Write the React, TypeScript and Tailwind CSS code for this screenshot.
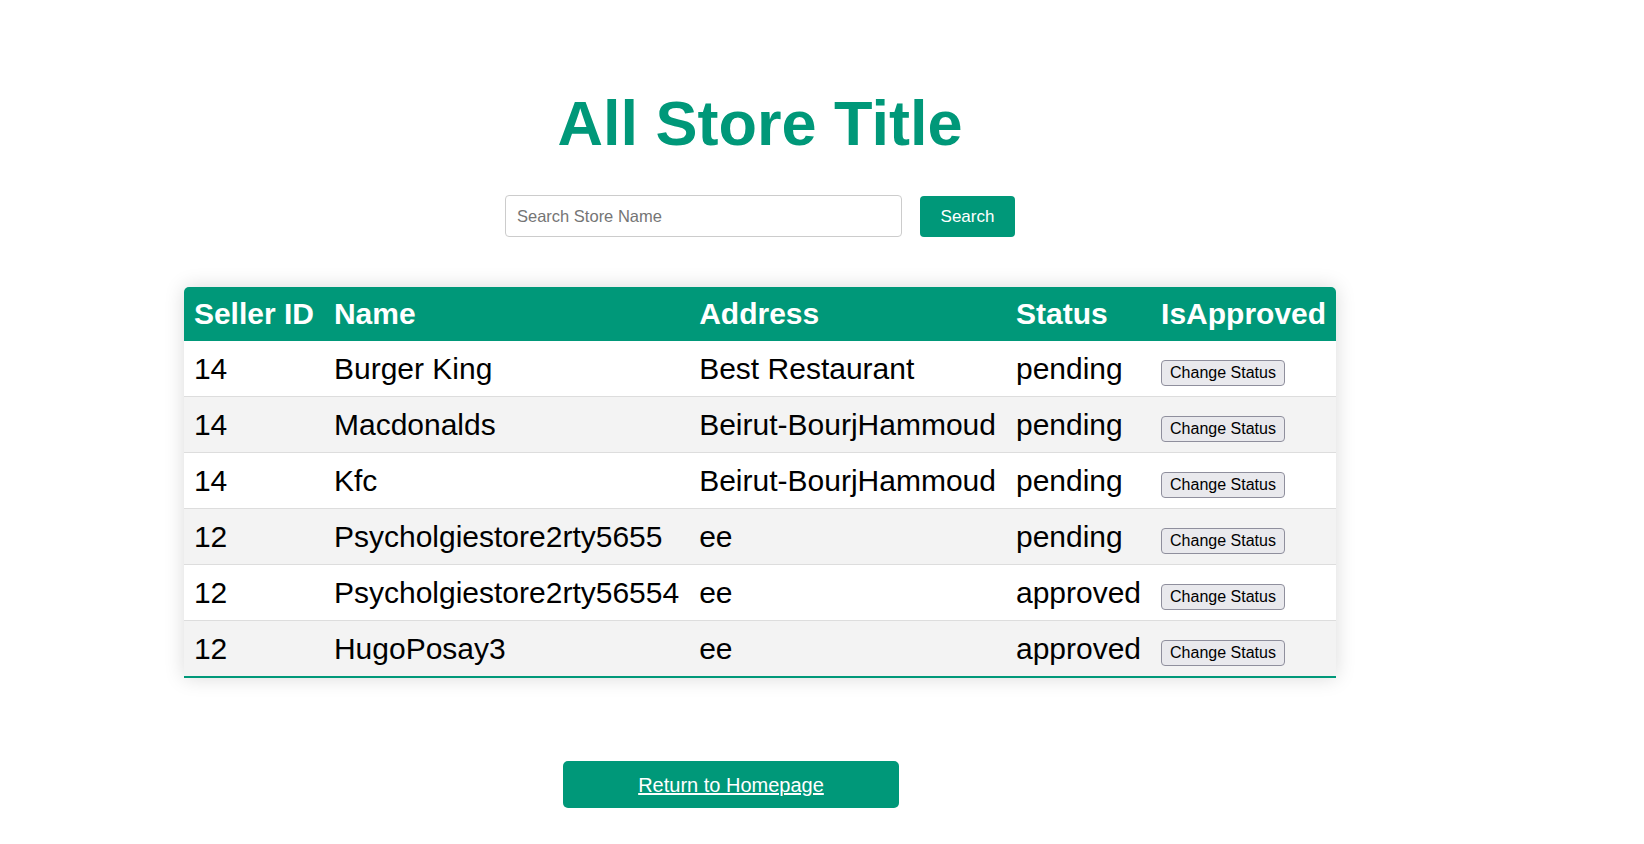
import { useState } from 'react'

const stores = [
  { sellerId: 14, name: 'Burger King', address: 'Best Restaurant', status: 'pending' },
  { sellerId: 14, name: 'Macdonalds', address: 'Beirut-BourjHammoud', status: 'pending' },
  { sellerId: 14, name: 'Kfc', address: 'Beirut-BourjHammoud', status: 'pending' },
  { sellerId: 12, name: 'Psycholgiestore2rty5655', address: 'ee', status: 'pending' },
  { sellerId: 12, name: 'Psycholgiestore2rty56554', address: 'ee', status: 'approved' },
  { sellerId: 12, name: 'HugoPosay3', address: 'ee', status: 'approved' }
]

export default function App() {
  const [query, setQuery] = useState('')

  return (
    <div className="min-h-screen bg-white font-['Liberation_Sans',Arial,sans-serif] text-black">
      <div className="w-[1520px] flex flex-col items-center pt-[87px] pb-10">
        <h1 className="text-[63px] leading-[1.149] font-bold text-[#009879] mb-[36px]">
          All Store Title
        </h1>

        <div className="flex items-center gap-[18px] mb-[50px]">
          <input
            type="text"
            value={query}
            onChange={(e) => setQuery(e.target.value)}
            placeholder="Search Store Name"
            className="w-[397px] h-[42px] px-[11px] border border-[#cccccc] rounded-[4px] text-[16.5px] outline-none placeholder:text-[#757575]"
          />
          <button className="w-[95px] h-[41px] bg-[#009879] text-white text-[17px] rounded-[4px]">
            Search
          </button>
        </div>

        <div className="rounded-t-[5px] overflow-hidden shadow-[0_0_20px_rgba(0,0,0,0.15)]">
          <table className="border-collapse text-[30px] leading-[34px]">
            <thead>
              <tr className="bg-[#009879] text-white text-left">
                <th className="p-[10px] font-bold">Seller ID</th>
                <th className="p-[10px] font-bold">Name</th>
                <th className="p-[10px] font-bold">Address</th>
                <th className="p-[10px] font-bold">Status</th>
                <th className="p-[10px] font-bold">IsApproved</th>
              </tr>
            </thead>
            <tbody>
              {stores.map((s, i) => (
                <tr
                  key={i}
                  className={`${i % 2 === 1 ? 'bg-[#f3f3f3]' : 'bg-white'} ${
                    i === stores.length - 1 ? 'border-b-2 border-[#009879]' : 'border-b border-[#dddddd]'
                  }`}
                >
                  <td className="p-[10px]">{s.sellerId}</td>
                  <td className="p-[10px]">{s.name}</td>
                  <td className="p-[10px]">{s.address}</td>
                  <td className="p-[10px]">{s.status}</td>
                  <td className="p-[10px]">
                    <button className="text-[16px] leading-[18px] px-[8px] py-[3px] bg-[#e9e9ed] border border-[#8f8f9d] rounded-[4px] text-black">
                      Change Status
                    </button>
                  </td>
                </tr>
              ))}
            </tbody>
          </table>
        </div>

        <div className="self-start ml-[563px] mt-[83px]">
          <a
            href="#"
            className="flex items-center justify-center w-[336px] h-[47px] bg-[#009879] text-white text-[20px] underline rounded-[5px]"
          >
            Return to Homepage
          </a>
        </div>
      </div>
    </div>
  )
}
